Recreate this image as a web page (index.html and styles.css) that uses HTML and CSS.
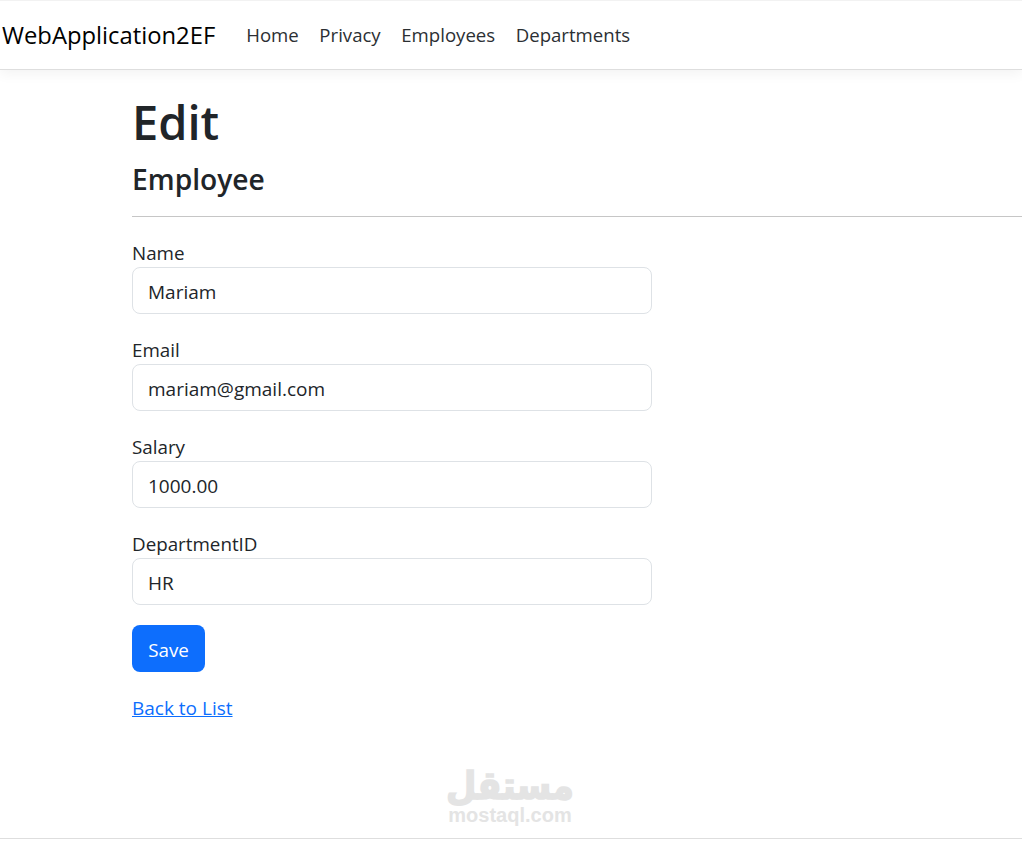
FILE: index.html
```html
<!DOCTYPE html>
<html lang="en">
<head>
    <meta charset="UTF-8">
    <meta name="viewport" content="width=device-width, initial-scale=1.0">
    <title>Edit - WebApplication2EF</title>
    <link rel="stylesheet" href="styles.css">
</head>
<body>
    <nav class="navbar">
        <a class="brand" href="#">WebApplication2EF</a>
        <ul class="nav-links">
            <li><a href="#">Home</a></li>
            <li><a href="#">Privacy</a></li>
            <li><a href="#">Employees</a></li>
            <li><a href="#">Departments</a></li>
        </ul>
    </nav>

    <main class="container">
        <h1>Edit</h1>
        <h4>Employee</h4>
        <hr>
        <form class="edit-form">
            <div class="form-group">
                <label for="name">Name</label>
                <input id="name" type="text" value="Mariam">
            </div>
            <div class="form-group">
                <label for="email">Email</label>
                <input id="email" type="text" value="mariam@gmail.com">
            </div>
            <div class="form-group">
                <label for="salary">Salary</label>
                <input id="salary" type="text" value="1000.00">
            </div>
            <div class="form-group">
                <label for="department">DepartmentID</label>
                <input id="department" type="text" value="HR">
            </div>
            <button class="save-btn" type="button">Save</button>
        </form>
        <a class="back-link" href="#">Back to List</a>
    </main>

    <div class="watermark">
        <span class="watermark-ar" lang="ar" dir="rtl">مستقل</span>
        <span class="watermark-en">mostaql.com</span>
    </div>

    <footer class="footer"></footer>
</body>
</html>
```

FILE: styles.css
```css
:root {
    --text: #212529;
    --blue: #0d6efd;
    --border: #dee2e6;
}

html, body {
    height: 100%;
}

body {
    font-family: 'Open Sans', 'Noto Sans', sans-serif;
    font-size: 18.8px;
    color: var(--text);
    background-color: #fff;
    margin: 0;
    position: relative;
    overflow: hidden;
}

.navbar {
    display: flex;
    align-items: center;
    height: 68px;
    padding-left: 2px;
    border-top: 1px solid #f2f2f2;
    border-bottom: 1px solid #dedede;
    box-shadow: 0 4px 12px rgba(0, 0, 0, 0.05);
}

.brand {
    font-size: 23.8px;
    line-height: 30px;
    color: #000;
    text-decoration: none;
    margin-right: 20.7px;
}

.nav-links {
    display: flex;
    list-style: none;
    margin: -2px 0 0 0;
    padding: 0;
}

.nav-links a {
    display: block;
    padding: 0 10.3px;
    font-size: 18.6px;
    color: #2b2f33;
    text-decoration: none;
}

.container {
    padding-left: 132px;
    padding-top: 22px;
}

h1 {
    font-size: 47px;
    font-weight: 600;
    line-height: 60px;
    margin: 0 0 9px 0;
}

h4 {
    font-size: 28.2px;
    font-weight: 600;
    line-height: 36px;
    margin: 0;
}

hr {
    border: none;
    border-top: 1px solid #c6c6c6;
    margin: 19px 0 23px 0;
}

.edit-form {
    display: flex;
    flex-direction: column;
    gap: 23px;
    width: 520px;
}

label {
    display: block;
    line-height: 27px;
}

input {
    display: block;
    box-sizing: border-box;
    width: 100%;
    height: 47px;
    padding: 2px 15px 0 15px;
    font: inherit;
    font-size: 19px;
    color: var(--text);
    background-color: #fff;
    border: 1px solid var(--border);
    border-radius: 8px;
}

.save-btn {
    display: block;
    height: 47px;
    width: 73px;
    padding: 2px 0 0 0;
    margin-top: -3px;
    font: inherit;
    color: #fff;
    background-color: var(--blue);
    border: none;
    border-radius: 8px;
    cursor: pointer;
}

.back-link {
    display: inline-block;
    margin-top: 23px;
    line-height: 27px;
    font-size: 19px;
    color: var(--blue);
}

.watermark {
    position: absolute;
    left: 420px;
    top: 768px;
    width: 180px;
    display: flex;
    flex-direction: column;
    align-items: center;
    color: #e4e4e4;
    font-weight: 700;
}

.watermark-ar {
    font-family: 'DejaVu Sans', sans-serif;
    font-size: 35px;
    line-height: 36px;
    -webkit-text-stroke: 1.5px #e4e4e4;
    transform: scaleY(1.1);
}

.watermark-en {
    font-family: 'Liberation Sans', sans-serif;
    font-size: 20px;
    line-height: 18px;
    margin-top: 2px;
}

.footer {
    position: absolute;
    left: 0;
    right: 0;
    top: 838px;
    border-top: 1px solid #dedede;
}
```
